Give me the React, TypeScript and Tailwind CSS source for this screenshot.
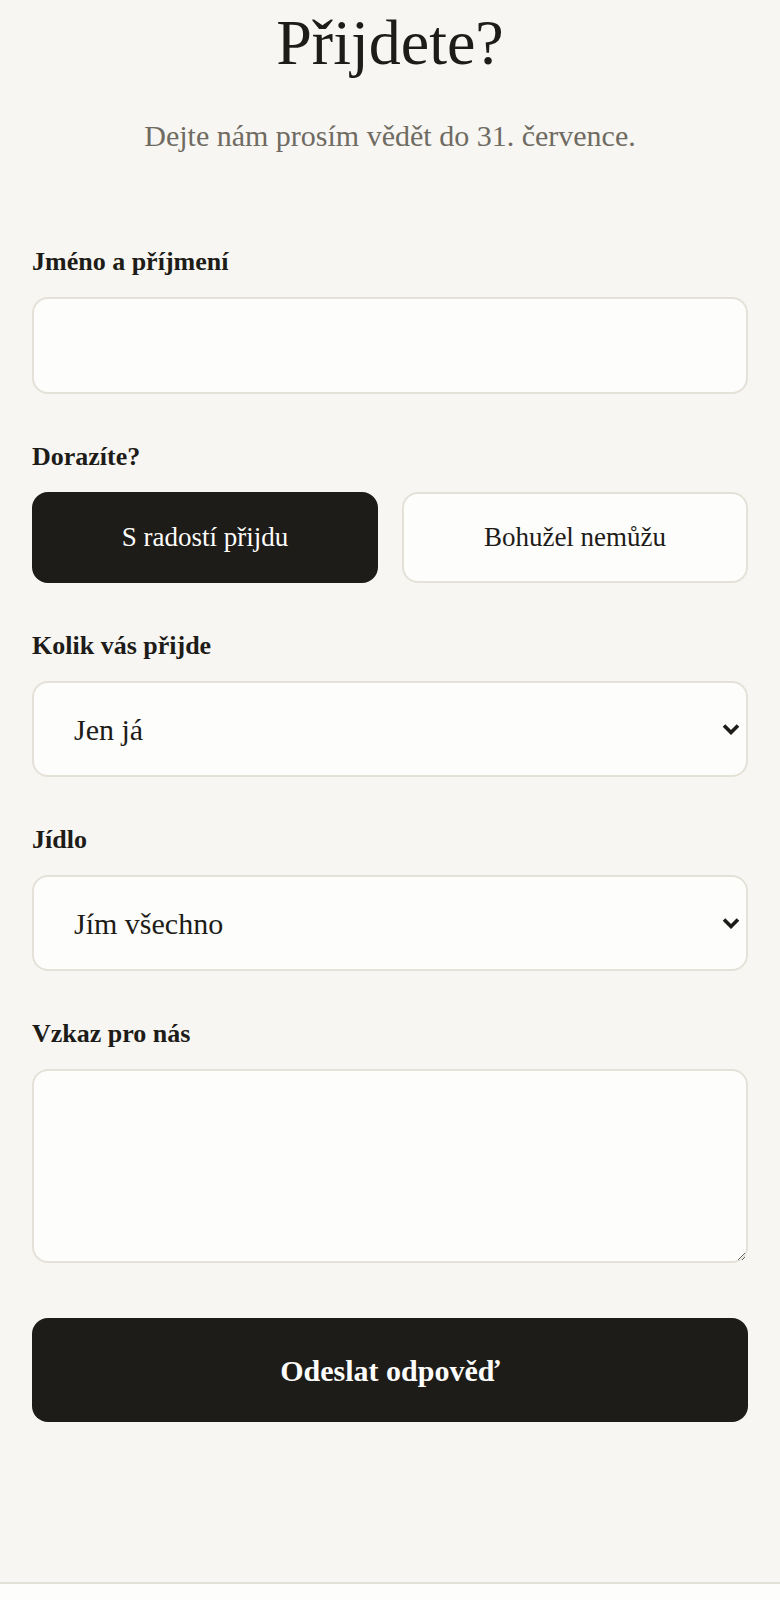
import React, { useState } from 'react';

const Chevron: React.FC = () => (
  <svg
    width="18"
    height="12"
    viewBox="0 0 18 12"
    className="pointer-events-none absolute right-[8px] top-1/2 -translate-y-1/2"
  >
    <path d="M2 2.5 L9 9.5 L16 2.5" fill="none" stroke="#1e1c18" strokeWidth="3.6" />
  </svg>
);

const labelCls = 'mb-[19px] block text-[26px] font-bold leading-[32px] text-[#1e1c18]';
const boxCls =
  'w-full rounded-2xl border-2 border-[#e4e1d8] bg-[#fdfdfb] text-[30px] text-[#1e1c18] outline-none';

const App: React.FC = () => {
  const [attending, setAttending] = useState<'yes' | 'no'>('yes');

  return (
    <div className="min-h-screen bg-[#f7f6f2] font-['Liberation_Serif',serif] text-[#1e1c18]">
      <section className="px-8 pt-[11px] pb-[160px]">
        <h1 className="text-center text-[64px] leading-none">Přijdete?</h1>
        <p className="mt-[43px] text-center text-[30px] leading-[36px] text-[#6f6b62]">
          Dejte nám prosím vědět do 31. července.
        </p>

        <form className="mt-[92px] flex flex-col gap-[47px]" onSubmit={(e) => e.preventDefault()}>
          <div>
            <label className={labelCls}>Jméno a příjmení</label>
            <input type="text" className={`${boxCls} h-[97px] px-[40px]`} />
          </div>

          <div>
            <label className={labelCls}>Dorazíte?</label>
            <div className="grid grid-cols-2 gap-6">
              <button
                type="button"
                onClick={() => setAttending('yes')}
                className={`h-[91px] rounded-2xl border-2 text-[27px] ${
                  attending === 'yes'
                    ? 'border-[#1e1c18] bg-[#1e1c18] text-[#fdfdfb]'
                    : 'border-[#e4e1d8] bg-[#fdfdfb] text-[#1e1c18]'
                }`}
              >
                S radostí přijdu
              </button>
              <button
                type="button"
                onClick={() => setAttending('no')}
                className={`h-[91px] rounded-2xl border-2 text-[27px] ${
                  attending === 'no'
                    ? 'border-[#1e1c18] bg-[#1e1c18] text-[#fdfdfb]'
                    : 'border-[#e4e1d8] bg-[#fdfdfb] text-[#1e1c18]'
                }`}
              >
                Bohužel nemůžu
              </button>
            </div>
          </div>

          <div>
            <label className={labelCls}>Kolik vás přijde</label>
            <div className="relative">
              <select className={`${boxCls} h-[96px] appearance-none pl-[40px] pr-12`} defaultValue="1">
                <option value="1">Jen já</option>
                <option value="2">Dva</option>
                <option value="3">Tři</option>
                <option value="4">Čtyři</option>
              </select>
              <Chevron />
            </div>
          </div>

          <div>
            <label className={labelCls}>Jídlo</label>
            <div className="relative">
              <select className={`${boxCls} h-[96px] appearance-none pl-[40px] pr-12`} defaultValue="all">
                <option value="all">Jím všechno</option>
                <option value="veg">Vegetarián</option>
                <option value="vegan">Vegan</option>
              </select>
              <Chevron />
            </div>
          </div>

          <div>
            <label className={labelCls}>Vzkaz pro nás</label>
            <textarea className={`${boxCls} block h-[194px] px-[40px] py-6`} />
          </div>

          <button
            type="submit"
            className="mt-[8px] h-[104px] w-full rounded-2xl bg-[#1e1c18] text-[30px] font-bold text-[#fdfdfb]"
          >
            Odeslat odpověď
          </button>
        </form>
      </section>

      <footer className="h-[200px] border-t-2 border-[#e3e0d6] bg-[#fdfdfb]" />
    </div>
  );
};

export default App;
